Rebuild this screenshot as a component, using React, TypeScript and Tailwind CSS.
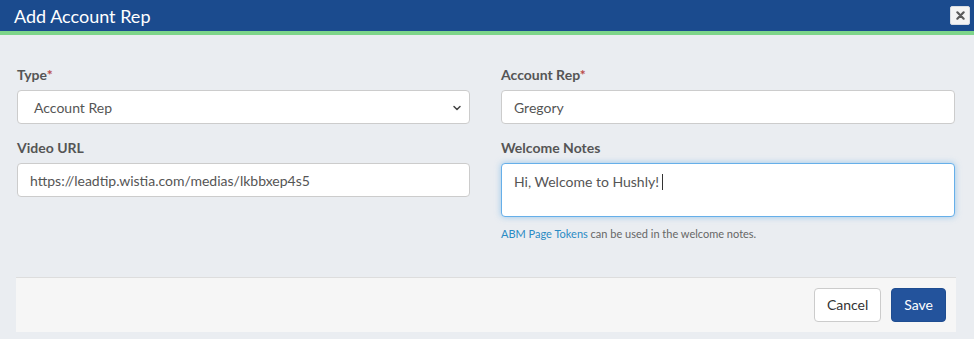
import { ChevronDown } from 'lucide-react';

export default function App() {
  return (
    <div className="h-[339px] w-[974px] overflow-hidden bg-[#eaedf1] font-['Lato','Liberation_Sans',sans-serif] text-[14px] text-[#555]">
      <header className="flex h-[31px] items-center justify-between bg-[#1b4b8e] pl-[14px] pr-[4px]">
        <h1 className="text-[18px] leading-none text-white">Add Account Rep</h1>
        <button className="flex h-[19px] w-[20px] items-center justify-center rounded-[2px] border border-[#d8dce2] bg-[#f4f4f4] text-[#5a5a5a]">
          <svg viewBox="0 0 10 10" className="h-[9px] w-[9px]">
            <path d="M1.5 1.5 L8.5 8.5 M8.5 1.5 L1.5 8.5" stroke="currentColor" strokeWidth="2.4" strokeLinecap="round" />
          </svg>
        </button>
      </header>
      <div className="h-[4px] bg-[#7dd58a]" />

      <div className="grid grid-cols-[453px_454px] gap-x-[31px] pl-[17px] pt-[30px]">
        <Field label="Type" required>
          <div className="relative flex h-[34px] items-center rounded-[4px] border border-[#ccc] bg-white pl-[16px] text-[#555]">
            Account Rep
            <ChevronDown className="absolute right-[6px] top-[11px] h-[12px] w-[12px] text-[#444]" strokeWidth={3} />
          </div>
        </Field>
        <Field label="Account Rep" required>
          <div className="flex h-[34px] items-center rounded-[4px] border border-[#ccc] bg-white px-[12px]">Gregory</div>
        </Field>
        <Field label="Video URL">
          <div className="flex h-[34px] items-center rounded-[4px] border border-[#ccc] bg-white px-[12px]">
            https://leadtip.wistia.com/medias/lkbbxep4s5
          </div>
        </Field>
        <Field label="Welcome Notes">
          <div className="h-[54px] rounded-[4px] border border-[#66afe9] bg-white px-[12px] pt-[7px] shadow-[0_0_6px_rgba(102,175,233,0.6)]">
            Hi, Welcome to Hushly!
            <span className="ml-[3px] inline-block h-[16px] w-px translate-y-[3px] bg-[#333]" />
          </div>
          <p className="mt-[9px] text-[11px] text-[#666]">
            <a className="text-[#2a8bc4]">ABM Page Tokens</a> can be used in the welcome notes.
          </p>
        </Field>
      </div>

      <footer className="ml-[16px] mt-[20px] flex h-[55px] w-[940px] items-center justify-end gap-[10px] border-t border-[#dddddd] bg-[#f6f6f6] pr-[10px]">
        <button className="h-[34px] rounded-[4px] border border-[#ccc] bg-white px-[12px] text-[#333]">Cancel</button>
        <button className="h-[34px] rounded-[4px] border border-[#1f4d91] bg-[#23539c] px-[12px] text-white">Save</button>
      </footer>
    </div>
  );
}

function Field({ label, required, children }: { label: string; required?: boolean; children: React.ReactNode }) {
  return (
    <div className="mb-[14px]">
      <label className="mb-[5px] block text-[14px] font-bold leading-[20px] text-[#555]">
        {label}
        {required && <span className="text-[#b94a48]">*</span>}
      </label>
      {children}
    </div>
  );
}
